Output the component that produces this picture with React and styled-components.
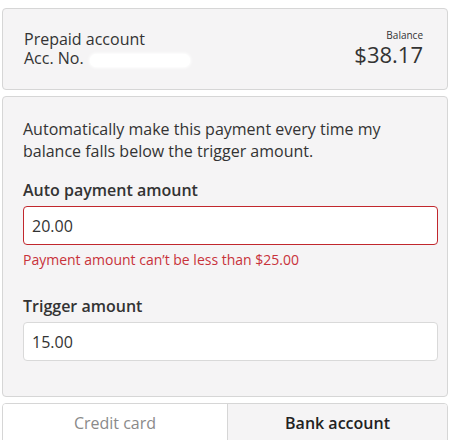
import React from "react";
import styled, { createGlobalStyle } from "styled-components";

const Global = createGlobalStyle`
  html, body { margin: 0; padding: 0; background: #ffffff; }
  body { font-family: "Open Sans", "Noto Sans", sans-serif; color: #333333; }
  * { box-sizing: border-box; }
`;

const Page = styled.div`
  padding: 8px 2px 0 2px;
  display: flex;
  flex-direction: column;
  gap: 6px;
  width: 450px;
  height: 440px;
  overflow: hidden;
  & > * { flex-shrink: 0; }
`;

const Card = styled.div`
  background: #f5f4f5;
  border: 1px solid #d6d6d6;
  border-radius: 4px;
`;

const AccountCard = styled(Card)`
  height: 82px;
  display: flex;
  align-items: center;
  justify-content: space-between;
  padding: 0 24px 0 21px;
`;

const AccountInfo = styled.div`
  font-size: 16px;
  line-height: 19px;
`;

const AccRow = styled.div`
  display: flex;
  align-items: center;
`;

const Redacted = styled.span`
  display: inline-block;
  width: 100px;
  height: 13px;
  margin-left: 6px;
  margin-top: 3px;
  background: #ffffff;
  border-radius: 6px;
  box-shadow: 0 0 3px 1px #ffffff;
`;

const BalanceBox = styled.div`
  display: flex;
  flex-direction: column;
  align-items: flex-end;
  margin-top: -3px;
`;

const BalanceLabel = styled.div`
  font-size: 10px;
  line-height: 13px;
`;

const BalanceValue = styled.div`
  font-size: 22px;
  line-height: 24px;
`;

const FormCard = styled(Card)`
  padding: 21px 10px 34px 20px;
  height: 301px;
`;

const Intro = styled.p`
  margin: 0 0 17px 0;
  font-size: 16px;
  line-height: 22px;
  color: #333;
`;

const Label = styled.div`
  font-size: 16px;
  line-height: 22px;
  font-weight: 600;
  color: #333;
  margin-bottom: 5px;
`;

const Input = styled.div`
  height: 39px;
  width: 415px;
  background: #ffffff;
  border: 1px solid ${(p) => (p.$error ? "#c1272d" : "#d9d9d9")};
  border-radius: 4px;
  padding: 0 8px;
  display: flex;
  align-items: center;
  font-size: 16px;
  color: #333;
`;

const ErrorText = styled.div`
  margin-top: 5px;
  font-size: 14px;
  line-height: 20px;
  color: #c8323a;
`;

const Field = styled.div`
  margin-bottom: ${(p) => p.$gap || 0}px;
`;

const Tabs = styled.div`
  display: grid;
  grid-template-columns: 224px 1fr;
  height: 60px;
  border: 1px solid #d6d6d6;
  border-radius: 4px 4px 0 0;
  overflow: hidden;
`;

const Tab = styled.div`
  background: ${(p) => (p.$active ? "#f5f4f5" : "#ffffff")};
  color: ${(p) => (p.$active ? "#222" : "#8a8a8a")};
  font-weight: ${(p) => (p.$active ? 600 : 400)};
  font-size: 16px;
  line-height: 22px;
  text-align: center;
  padding-top: 8px;
  & + & { border-left: 1px solid #d6d6d6; }
`;

export default function App() {
  return (
    <>
      <Global />
      <Page>
        <AccountCard>
          <AccountInfo>
            <div>Prepaid account</div>
            <AccRow>
              Acc. No.
              <Redacted />
            </AccRow>
          </AccountInfo>
          <BalanceBox>
            <BalanceLabel>Balance</BalanceLabel>
            <BalanceValue>$38.17</BalanceValue>
          </BalanceBox>
        </AccountCard>
        <FormCard>
          <Intro>
            Automatically make this payment every time my balance falls below
            the trigger amount.
          </Intro>
          <Field $gap={25}>
            <Label>Auto payment amount</Label>
            <Input $error>20.00</Input>
            <ErrorText>Payment amount can’t be less than $25.00</ErrorText>
          </Field>
          <Field>
            <Label>Trigger amount</Label>
            <Input>15.00</Input>
          </Field>
        </FormCard>
        <Tabs>
          <Tab>Credit card</Tab>
          <Tab $active>Bank account</Tab>
        </Tabs>
      </Page>
    </>
  );
}
